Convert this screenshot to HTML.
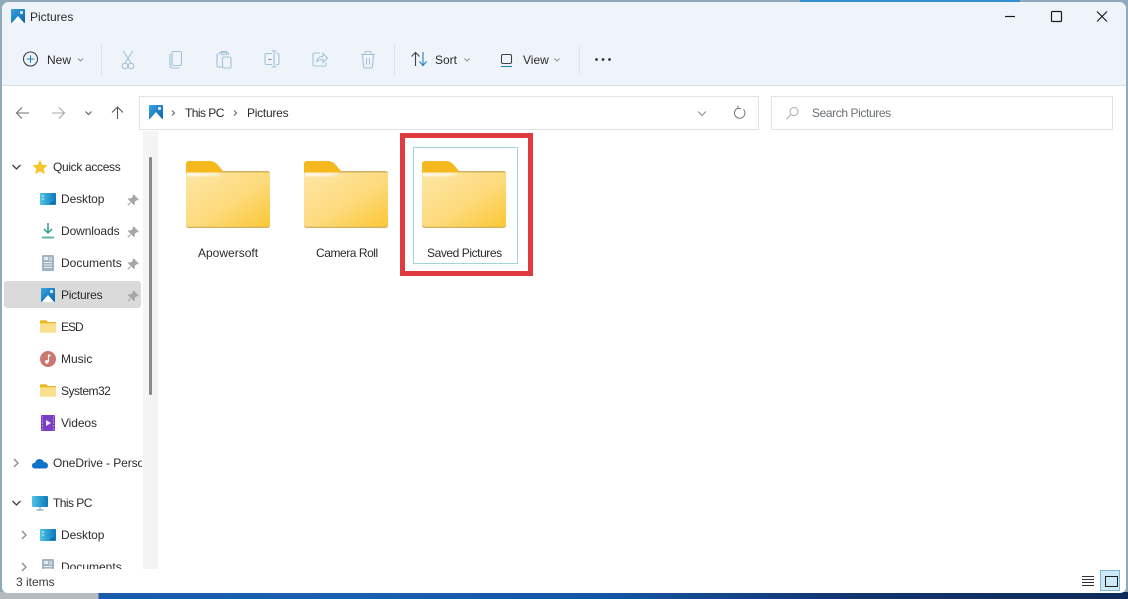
<!DOCTYPE html>
<html><head><meta charset="utf-8"><style>
html,body{margin:0;padding:0;width:1128px;height:599px;overflow:hidden;background:#16407f}
body{position:relative;font-family:"Liberation Sans",sans-serif;font-size:12px;color:#222}
.a{position:absolute}
.t{position:absolute;white-space:nowrap;line-height:16px;height:16px;color:#2b2b2b}
svg{position:absolute;overflow:visible}
</style></head><body>
<svg width="0" height="0" style="position:absolute"><defs>
<linearGradient id="fg" x1="0" y1="0" x2="1" y2="1"><stop offset="0" stop-color="#fde6a6"/><stop offset=".55" stop-color="#fdda7c"/><stop offset="1" stop-color="#fbc835"/></linearGradient>
<linearGradient id="hl" x1="0" y1="0" x2="1" y2="0"><stop offset="0" stop-color="#fbf6e6"/><stop offset=".7" stop-color="#fbf0cf"/><stop offset="1" stop-color="#fde6a6"/></linearGradient>
<linearGradient id="sky" x1="0" y1="0" x2="1" y2="1"><stop offset="0" stop-color="#36a3e2"/><stop offset="1" stop-color="#0f64ad"/></linearGradient>
<linearGradient id="dsk" x1="0" y1="0" x2="1" y2="0"><stop offset="0" stop-color="#4fc3e8"/><stop offset="1" stop-color="#0c79b8"/></linearGradient>
<symbol id="folder" viewBox="0 0 84 67">
<path d="M3 0H24Q28 0 31 3L37 10L37 15H0V3Q0 0 3 0Z" fill="#f5b91e"/>
<path d="M0 12H34L37 10H81.500Q84 10 84 13V64Q84 67 81 67H3Q0 67 0 64Z" fill="#d2b060"/>
<path d="M0 12H34L37 11.500H81.500Q84 11.500 84 13V63Q84 65.700 81 65.700H3Q0 65.700 0 63Z" fill="url(#fg)"/>
<path d="M1 11.500H37L33 15.500H3Q1 15.500 1 14Z" fill="url(#hl)"/>
</symbol>
<symbol id="small" viewBox="0 0 18 14">
<path d="M1 0H7L9 2H17Q18 2 18 3V5H0V1Q0 0 1 0Z" fill="#f0b528"/>
<path d="M0 3.500H18V13Q18 14 17 14H1Q0 14 0 13Z" fill="#fcdf8c"/>
</symbol>
<symbol id="pic" viewBox="0 0 16 16">
<rect width="16" height="16" rx="1" fill="url(#sky)"/>
<path d="M1 16L8 8L15 16Z" fill="#fff"/>
<circle cx="12" cy="4" r="1.800" fill="#d5effc"/>
</symbol>
<symbol id="pin" viewBox="0 0 12 12">
<path d="M6.500 .2L11.800 5.500L10.500 6.500L9.400 6.200L7.800 8L7.800 10.500L6.800 11L1 5.200L1.500 4.200L4 4.200L5.800 2.600L5.600 1.500Z" fill="#a3a8ac"/>
<path d="M3.500 8.500L.8 11.200" stroke="#a3a8ac" stroke-width="1.200"/>
</symbol>
<symbol id="desk" viewBox="0 0 16 12">
<rect width="16" height="12" rx="1" fill="url(#dsk)"/>
<path d="M2 3h2M2 6h2" stroke="#e6f7fd"/>
<path d="M10 11v-1M12 11V9M14 11V8" stroke="#0b5c93"/>
</symbol>
<symbol id="doc" viewBox="0 0 12 16">
<rect width="12" height="16" rx="1" fill="#a5b3bf"/>
<rect x="2" y="2" width="4" height="3" fill="#e5ebef"/>
<path d="M7 3h3M7 5h3M2 7.500h8M2 10h8M2 12.500h8" stroke="#e8edf1"/>
</symbol>
</defs></svg>

<!-- backdrop edges -->
<div class="a" style="left:0;top:0;width:1128px;height:599px;background:#8faab8"></div>
<div class="a" style="left:0;top:592px;width:1128px;height:7px;background:linear-gradient(90deg,#b5bbbf 0,#b5bbbf 98px,#1a5cab 99px,#1b5fb0 360px,#1556a4 600px,#12356f 850px,#0d2a5a 100%)"></div>
<div class="a" style="left:800px;top:0;width:220px;height:2px;background:#2f8fcf"></div>

<!-- window -->
<div class="a" style="left:2px;top:2px;width:1124px;height:591px;background:#fff;border-radius:7px 7px 6px 6px;overflow:hidden">
<div class="a" style="left:0;top:0;width:1124px;height:83px;background:#eef4f9;border-bottom:1px solid #d9dfe4"></div>
</div>

<!-- title -->
<svg style="left:11px;top:9px" width="14" height="14"><use href="#pic" width="14" height="14"/></svg>
<div class="t" style="left:30px;top:9px">Pictures</div>
<svg style="left:1000px;top:0" width="128" height="30" fill="none" stroke="#1c1c1c">
<path d="M5 16.500H15" stroke-width="1.200"/>
<rect x="51.500" y="11.500" width="10" height="10" rx="1" stroke-width="1.200"/>
<path d="M97 11.500L107 21.500M107 11.500L97 21.500" stroke-width="1.200"/>
</svg>

<!-- toolbar -->
<svg style="left:0;top:40px" width="640" height="40" fill="none">
<circle cx="30.500" cy="19" r="7" stroke="#3e4347" stroke-width="1.100"/>
<path d="M30.500 15.200v7.600M26.700 19h7.600" stroke="#2186b8" stroke-width="1.100"/>
<path d="M78 18.500l2.500 2.500 2.500-2.500" stroke="#888" stroke-width=".9"/>
<path d="M101.500 4V35" stroke="#dfe5ea"/>
<g stroke="#a3c3d8" stroke-width="1.100">
<path d="M123 11L131 23M133 11L125 23"/><circle cx="125" cy="26" r="2.800"/><circle cx="131" cy="26" r="2.800"/>
<rect x="172" y="11.500" width="9.500" height="14" rx="1.500"/><path d="M170 14v11.500q0 2.500 2.500 2.500h7"/>
<path d="M219 15v-1q0-1.500 1.500-1.500h6.500q1.500 0 1.500 1.500v1"/><path d="M221.500 11.500h5v3h-5z"/><path d="M222 27h-3.500q-1.500 0-1.500-1.500V14"/><rect x="222.500" y="17" width="8.500" height="11" rx="1.500"/>
<path d="M272 13.500h-5.500q-1.500 0-1.500 1.500v8q0 1.500 1.500 1.500h5.500M276 13.500h2q1 0 1 1.500v8q0 1.500-1 1.500h-2M274 11v16M271.500 11h5M271.500 27h5"/>
<path d="M268.500 19.500h3" stroke="#6f8ba0"/>
<path d="M320 13h-5.500q-1.500 0-1.500 1.500v10q0 1.500 1.500 1.500h10q1.500 0 1.500-1.500v-2"/><path d="M316.500 22c.5-3.500 3-5.500 6.500-5.500v-3l4.500 4.500-4.500 4.500v-3c-2.500 0-5 .5-6.500 2.500z"/>
<path d="M361 14.500h14M365 14.500v-1.500q0-1.500 1.500-1.500h3q1.500 0 1.500 1.500v1.500M362.500 14.500l1 12q.2 1.500 1.500 1.500h6q1.300 0 1.500-1.500l1-12M366.500 18v6.500M369.500 18v6.500"/>
</g>
<path d="M394.500 4V35M579.500 4V35" stroke="#dfe5ea"/>
<path d="M415.500 26V12.500M411.500 16.500l4-4 4 4" stroke="#3e4347" stroke-width="1.100"/>
<path d="M423 12v13.500M419.500 21.500l3.500 4 3.500-4" stroke="#1e85b5" stroke-width="1.100"/>
<path d="M464.500 18.500l2.500 2.500 2.500-2.500M554.500 18.500l2.500 2.500 2.500-2.500" stroke="#888" stroke-width=".9"/>
<rect x="501.500" y="14.500" width="10" height="9" rx="1.500" stroke="#3e4347" stroke-width="1.100"/>
<path d="M501 26.500h11" stroke="#2186b8" stroke-width="1.100"/>
<g fill="#2f3336"><circle cx="596.500" cy="19.500" r="1.400"/><circle cx="603" cy="19.500" r="1.400"/><circle cx="609.500" cy="19.500" r="1.400"/></g>
</svg>
<div class="t" style="left:47px;top:52px">New</div>
<div class="t" style="left:435px;top:52px">Sort</div>
<div class="t" style="left:523px;top:52px">View</div>

<!-- nav -->
<svg style="left:0;top:96px" width="140" height="34" fill="none">
<path d="M29 17H17M22 11.500L16.500 17L22 22.500" stroke="#6a6f73" stroke-width="1.100"/>
<path d="M52 17H64M59 11.500L64.500 17L59 22.500" stroke="#a5aaae" stroke-width="1.100"/>
<path d="M85.500 15.500l3 3 3-3" stroke="#555a5e" stroke-width="1.100"/>
<path d="M117.500 23V11M112 16.500l5.500-5.500 5.500 5.500" stroke="#555a5e" stroke-width="1.100"/>
</svg>
<div class="a" style="left:139px;top:96px;width:618px;height:32px;border:1px solid #dfe3e6;background:#fff"></div>
<svg style="left:149px;top:105px" width="14" height="14"><use href="#pic" width="14" height="14"/></svg>
<svg style="left:0;top:96px;pointer-events:none" width="760" height="34" fill="none">
<path d="M172 14.500l2.500 2.500-2.500 2.500M234 14.500l2.500 2.500-2.500 2.500" stroke="#666" stroke-width="1.100"/>
<path d="M698 15.500l4 4 4-4" stroke="#888"/>
<path d="M743.500 13.500a5.200 5.200 0 1 1-5-1.500M738 9.500v3h3" stroke="#777"/>
</svg>
<div class="t" style="left:185px;top:105px;letter-spacing:-.55px">This PC</div>
<div class="t" style="left:247px;top:105px;letter-spacing:-.25px">Pictures</div>
<div class="a" style="left:771px;top:96px;width:340px;height:32px;border:1px solid #dfe3e6;background:#fff"></div>
<svg style="left:785px;top:106px" width="16" height="14" fill="none" stroke="#a5aaae"><circle cx="9" cy="5.500" r="4"/><path d="M6 8.500L1.500 13"/></svg>
<div class="t" style="left:812px;top:105px;color:#6a7074;letter-spacing:-.4px">Search Pictures</div>

<!-- sidebar -->
<div class="a" style="left:143px;top:131px;width:15px;height:438px;background:#f4f4f4"></div>
<div class="a" style="left:149px;top:157px;width:2.500px;height:238px;background:#8a8a8a;border-radius:1px"></div>
<div class="a" style="left:4px;top:281px;width:137px;height:27px;background:#dadada;border-radius:3px"></div>

<svg style="left:0;top:150px" width="30" height="420" fill="none" stroke="#3f3f3f" stroke-width="1.300">
<path d="M12.500 15l4 4 4-4"/>
<path d="M14 309l4 4-4 4" stroke="#8a8a8a"/>
<path d="M12.500 351l4 4 4-4"/>
<path d="M22 381l4 4-4 4" stroke="#8a8a8a"/>
<path d="M22 413l4 4-4 4" stroke="#8a8a8a"/>
</svg>
<svg style="left:32px;top:159px" width="16" height="16"><path d="M8 .5L10.300 5.700L15.800 6.200L11.600 9.900L12.900 15.300L8 12.400L3.100 15.300L4.400 9.900L.2 6.200L5.700 5.700Z" fill="#f8c62a"/></svg>
<div class="t" style="left:53px;top:159px;letter-spacing:-.33px">Quick access</div>

<svg style="left:40px;top:193px" width="16" height="12"><use href="#desk" width="16" height="12"/></svg>
<div class="t" style="left:61px;top:191px;letter-spacing:-.1px">Desktop</div>
<svg style="left:127px;top:194px" width="12" height="12"><use href="#pin" width="12" height="12"/></svg>

<svg style="left:41px;top:223px" width="15" height="16" fill="none"><path d="M7 0V9.500M3 6l4 4 4-4" stroke="#2e9e8f" stroke-width="1.500"/><path d="M1 14.500H13" stroke="#4bb3a6" stroke-width="1.800"/></svg>
<div class="t" style="left:61px;top:223px;letter-spacing:-.1px">Downloads</div>
<svg style="left:127px;top:226px" width="12" height="12"><use href="#pin" width="12" height="12"/></svg>

<svg style="left:42px;top:255px" width="12" height="16"><use href="#doc" width="12" height="16"/></svg>
<div class="t" style="left:61px;top:255px">Documents</div>
<svg style="left:127px;top:258px" width="12" height="12"><use href="#pin" width="12" height="12"/></svg>

<svg style="left:41px;top:288px" width="14" height="14"><use href="#pic" width="14" height="14"/></svg>
<div class="t" style="left:61px;top:287px;letter-spacing:-.25px">Pictures</div>
<svg style="left:127px;top:290px" width="12" height="12"><use href="#pin" width="12" height="12"/></svg>

<svg style="left:40px;top:320px" width="16" height="13"><use href="#small" width="16" height="13"/></svg>
<div class="t" style="left:61px;top:319px;letter-spacing:-1px">ESD</div>

<svg style="left:40px;top:351px" width="16" height="16" fill="none"><circle cx="8" cy="8" r="8" fill="#c9776f"/><path d="M8.500 3.500V10.500" stroke="#fff" stroke-width="1.200"/><circle cx="6.800" cy="10.800" r="1.800" fill="#fff"/><path d="M8.500 3.500Q10 5 11 5" stroke="#fff"/></svg>
<div class="t" style="left:61px;top:351px">Music</div>

<svg style="left:40px;top:384px" width="16" height="13"><use href="#small" width="16" height="13"/></svg>
<div class="t" style="left:61px;top:383px;letter-spacing:-.5px">System32</div>

<svg style="left:41px;top:415px" width="14" height="16"><rect width="14" height="16" rx="1" fill="#7a3fc4"/><path d="M1 2h1M1 5h1M1 8h1M1 11h1M1 14h1M12 2h1M12 5h1M12 8h1M12 11h1M12 14h1" stroke="#d6c2ef"/><path d="M5 5L10 8L5 11Z" fill="#f1e8fb"/></svg>
<div class="t" style="left:61px;top:415px;letter-spacing:-.1px">Videos</div>

<svg style="left:32px;top:457px" width="16" height="12"><path d="M3.500 11.500Q0 11.500 0 8.500Q0 6 3 5.800Q4 2 7.500 2Q10.500 2 12 5Q16 5.500 16 8.500Q16 11.500 13 11.500Z" fill="#0f74c8"/></svg>
<div class="a" style="left:53px;top:455px;width:89px;height:16px;overflow:hidden"><div class="t" style="left:0;top:0;letter-spacing:-.1px">OneDrive - Personal</div></div>

<svg style="left:32px;top:496px" width="16" height="15"><rect width="16" height="11" rx="1" fill="url(#dsk)"/><path d="M8 11v2.500M4.500 14h7" stroke="#7fa9bd" stroke-width="1.200"/></svg>
<div class="t" style="left:53px;top:495px;letter-spacing:-.55px">This PC</div>

<svg style="left:40px;top:529px" width="16" height="12"><use href="#desk" width="16" height="12"/></svg>
<div class="t" style="left:61px;top:527px;letter-spacing:-.1px">Desktop</div>

<div class="a" style="left:0;top:556px;width:142px;height:13px;overflow:hidden">
<svg style="left:42px;top:3px" width="12" height="16"><use href="#doc" width="12" height="16"/></svg>
<div class="t" style="left:61px;top:3px">Documents</div>
</div>

<!-- content -->
<div class="a" style="left:412.500px;top:147px;width:103.500px;height:115px;border:1px solid #a4d3dd"></div>
<svg style="left:186px;top:161px" width="84" height="67"><use href="#folder" width="84" height="67"/></svg>
<svg style="left:304px;top:161px" width="84" height="67"><use href="#folder" width="84" height="67"/></svg>
<svg style="left:422px;top:161px" width="84" height="67"><use href="#folder" width="84" height="67"/></svg>
<div class="t" style="left:198px;top:245px">Apowersoft</div>
<div class="t" style="left:316px;top:245px;letter-spacing:-.45px">Camera Roll</div>
<div class="t" style="left:427px;top:245px;letter-spacing:-.43px">Saved Pictures</div>
<div class="a" style="left:400px;top:133px;width:123px;height:133px;border:5px solid #e03c40"></div>

<!-- status -->
<div class="t" style="left:16px;top:574px;color:#3a3a3a">3 items</div>
<svg style="left:1080px;top:574px" width="16" height="14" stroke="#333" fill="none"><path d="M2 2.500H14M2 5.500H14M2 8.500H14M2 11.500H14"/></svg>
<div class="a" style="left:1100px;top:570px;width:20px;height:21px;background:#cde8f7;border:1px solid #7db8d6;box-sizing:border-box"></div>
<div class="a" style="left:1105px;top:576px;width:11px;height:9px;border:1px solid #222"></div>
</body></html>
